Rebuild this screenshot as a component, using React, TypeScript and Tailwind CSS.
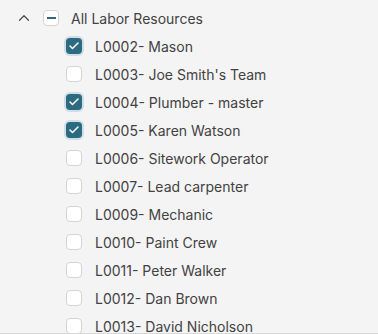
import { Check, ChevronUp } from "lucide-react";

const items = [
  { code: "L0002", name: "Mason", checked: true },
  { code: "L0003", name: "Joe Smith's Team", checked: false },
  { code: "L0004", name: "Plumber - master", checked: true },
  { code: "L0005", name: "Karen Watson", checked: true },
  { code: "L0006", name: "Sitework Operator", checked: false },
  { code: "L0007", name: "Lead carpenter", checked: false },
  { code: "L0009", name: "Mechanic", checked: false },
  { code: "L0010", name: "Paint Crew", checked: false },
  { code: "L0011", name: "Peter Walker", checked: false },
  { code: "L0012", name: "Dan Brown", checked: false },
  { code: "L0013", name: "David Nicholson", checked: false },
];

const Box = ({ checked }: { checked: boolean }) =>
  checked ? (
    <div className="w-[16px] h-[16px] rounded-[4px] bg-[#2b6a80] ring-2 ring-[#cfdfe5] flex items-center justify-center">
      <Check size={12} strokeWidth={3} className="text-white" />
    </div>
  ) : (
    <div className="w-[16px] h-[16px] rounded-[4px] bg-white border border-[#d4d4d4]" />
  );

export default function App() {
  return (
    <div
      className="w-[378px] h-[334px] bg-[#f4f4f4] overflow-hidden border-b border-[#d9d9d9] text-[14px] text-[#424242]"
      style={{ fontFamily: "Inter, 'Liberation Sans', sans-serif" }}
    >
      {/* parent row */}
      <div className="h-[28px] mt-[4px] flex items-center">
        <ChevronUp size={18} strokeWidth={1.6} className="ml-[15px] text-[#4a4a4a]" />
        <div className="ml-[10px] w-[16px] h-[16px] rounded-[4px] bg-white border border-[#d4d4d4] flex items-center justify-center">
          <div className="w-[9px] h-[2px] bg-[#2b6a80]" />
        </div>
        <span className="ml-[12px]">All Labor Resources</span>
      </div>
      {/* children */}
      {items.map((it) => (
        <div key={it.code} className="h-[28px] flex items-center pl-[66px]">
          <Box checked={it.checked} />
          <span className="ml-[13px]">
            {it.code}- {it.name}
          </span>
        </div>
      ))}
    </div>
  );
}
